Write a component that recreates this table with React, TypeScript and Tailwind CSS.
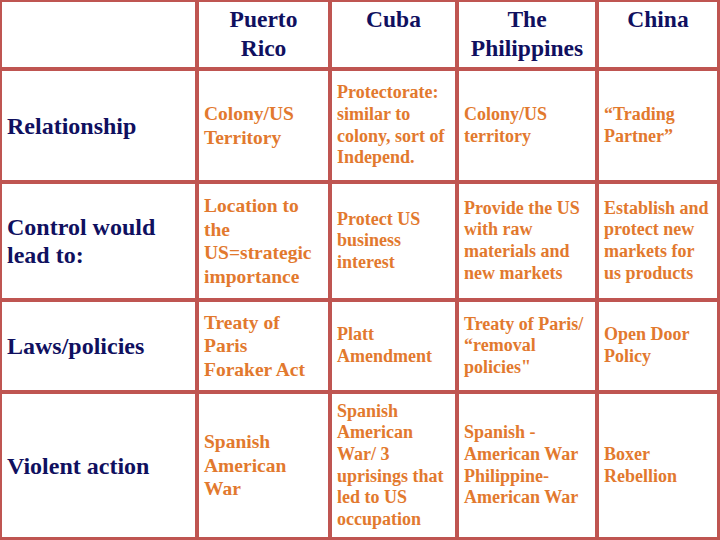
import React from "react";

const NAVY = "text-[#10105f]";
const ORANGE = "text-[#e2792e]";

type Cell = { lines: string[]; size: "pr" | "sm" };

const rows: { label: string[]; cells: Cell[] }[] = [
  {
    label: ["Relationship"],
    cells: [
      { lines: ["Colony/US", "Territory"], size: "pr" },
      { lines: ["Protectorate:", "similar to", "colony, sort of", "Independ."], size: "sm" },
      { lines: ["Colony/US", "territory"], size: "sm" },
      { lines: ["\u201cTrading", "Partner\u201d"], size: "sm" },
    ],
  },
  {
    label: ["Control would", "lead to:"],
    cells: [
      { lines: ["Location to", "the", "US=strategic", "importance"], size: "pr" },
      { lines: ["Protect US", "business", "interest"], size: "sm" },
      { lines: ["Provide the US", "with raw", "materials and", "new markets"], size: "sm" },
      { lines: ["Establish and", "protect new", "markets for", "us products"], size: "sm" },
    ],
  },
  {
    label: ["Laws/policies"],
    cells: [
      { lines: ["Treaty of", "Paris", "Foraker Act"], size: "pr" },
      { lines: ["Platt", "Amendment"], size: "sm" },
      { lines: ["Treaty of Paris/", "\u201cremoval", "policies\""], size: "sm" },
      { lines: ["Open Door", "Policy"], size: "sm" },
    ],
  },
  {
    label: ["Violent action"],
    cells: [
      { lines: ["Spanish", "American", "War"], size: "pr" },
      { lines: ["Spanish", "American", "War/ 3", "uprisings that", "led to US", "occupation"], size: "sm" },
      { lines: ["Spanish -", "American War", "Philippine-", "American War"], size: "sm" },
      { lines: ["Boxer", "Rebellion"], size: "sm" },
    ],
  },
];

const headers: string[][] = [["Puerto", "Rico"], ["Cuba"], ["The", "Philippines"], ["China"]];

function Lines({ lines }: { lines: string[] }) {
  return (
    <>
      {lines.map((l, i) => (
        <React.Fragment key={i}>
          {i > 0 && <br />}
          {l}
        </React.Fragment>
      ))}
    </>
  );
}

export default function App() {
  return (
    <div className="w-[720px] h-[540px] bg-[#bf5551] grid grid-cols-[193px_129px_123px_136px_118px] grid-rows-[65px_109px_114px_88px_143px] gap-[4px] pl-[2px] pr-[3px] pt-[2px] pb-[3px] font-bold font-['Liberation_Serif','Times_New_Roman',serif]">
      <div className="bg-white" />
      {headers.map((h, i) => (
        <div
          key={i}
          className={`bg-white text-center text-[23.5px] leading-[29px] pt-[3px] ${NAVY}`}
        >
          <Lines lines={h} />
        </div>
      ))}
      {rows.map((r, ri) => (
        <React.Fragment key={ri}>
          <div className={`bg-white flex items-center pl-[5px] text-[24px] leading-[28px] ${NAVY}`}>
            <div>
              <Lines lines={r.label} />
            </div>
          </div>
          {r.cells.map((c, ci) => (
            <div
              key={ci}
              className={`bg-white flex items-center pl-[5px] ${ORANGE} ${
                c.size === "pr" ? "text-[19.5px] leading-[23.5px]" : "text-[18px] leading-[21.6px]"
              }`}
            >
              <div>
                <Lines lines={c.lines} />
              </div>
            </div>
          ))}
        </React.Fragment>
      ))}
    </div>
  );
}
